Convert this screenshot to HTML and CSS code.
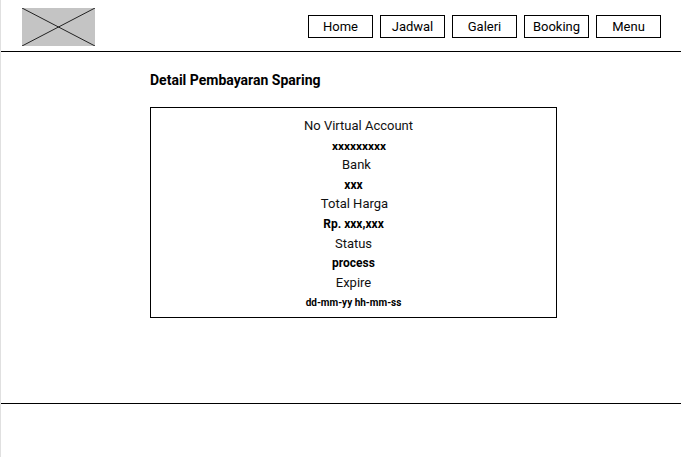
FILE: index.html
```html
<!DOCTYPE html>
<html>
<head>
<meta charset="utf-8">
<link rel="stylesheet" href="styles.css">
</head>
<body>
<div class="page">
  <header class="header">
    <div class="logo">
      <svg width="73" height="38" viewBox="0 0 73 38">
        <rect x="0" y="0" width="73" height="38" fill="#c4c4c4"/>
        <line x1="0" y1="0" x2="73" y2="38" stroke="#222" stroke-width="1"/>
        <line x1="73" y1="0" x2="0" y2="38" stroke="#222" stroke-width="1"/>
      </svg>
    </div>
    <nav class="nav">
      <a class="nav-btn">Home</a>
      <a class="nav-btn">Jadwal</a>
      <a class="nav-btn">Galeri</a>
      <a class="nav-btn">Booking</a>
      <a class="nav-btn">Menu</a>
    </nav>
  </header>
  <main class="main">
    <h1 class="title">Detail Pembayaran Sparing</h1>
    <section class="card">
      <div class="label label-va">No Virtual Account</div>
      <div class="value value-va">xxxxxxxxx</div>
      <div class="label label-bank">Bank</div>
      <div class="value">xxx</div>
      <div class="label label-total">Total Harga</div>
      <div class="value">Rp. xxx,xxx</div>
      <div class="label">Status</div>
      <div class="value">process</div>
      <div class="label">Expire</div>
      <div class="value small">dd-mm-yy hh-mm-ss</div>
    </section>
  </main>
  <footer class="footer"></footer>
</div>
</body>
</html>
```

FILE: styles.css
```css
html, body {
  margin: 0;
  padding: 0;
  background: #fff;
}
body {
  font-family: Roboto, "Liberation Sans", sans-serif;
  color: #000;
}
.page {
  border-left: 1px solid #e0e0e0;
  min-height: 457px;
  box-sizing: border-box;
}
.header {
  height: 51px;
  border-bottom: 1px solid #000;
  display: flex;
  align-items: flex-start;
  justify-content: space-between;
  padding: 0 20px 0 21px;
}
.logo {
  margin-top: 8px;
  height: 38px;
}
.logo svg { display: block; }
.nav {
  display: flex;
  gap: 7px;
  margin-top: 15px;
}
.nav-btn {
  width: 65px;
  height: 23px;
  box-sizing: border-box;
  border: 1px solid #000;
  font-size: 13px;
  display: flex;
  align-items: center;
  justify-content: center;
}
.main {
  padding: 20px 0 0 149px;
  height: 331px;
}
.title {
  margin: 0;
  font-size: 14px;
  font-weight: 700;
  line-height: 17px;
}
.card {
  margin-top: 18px;
  width: 407px;
  height: 211px;
  box-sizing: border-box;
  border: 1px solid #000;
  padding-top: 8px;
  display: flex;
  flex-direction: column;
  align-items: center;
}
.label {
  font-size: 13px;
  line-height: 19.6px;
  color: #111;
}
.label-va { padding-left: 10px; }
.label-bank { padding-left: 6px; }
.label-total { padding-left: 2px; }
.value {
  font-size: 12px;
  font-weight: 700;
  line-height: 19.6px;
  padding-top: 1px;
  margin-bottom: -1px;
}
.value-va {
  padding-left: 11px;
  font-size: 11.8px;
}
.value.small {
  font-size: 10px;
}
.footer {
  border-top: 1px solid #000;
  height: 53px;
}
```
